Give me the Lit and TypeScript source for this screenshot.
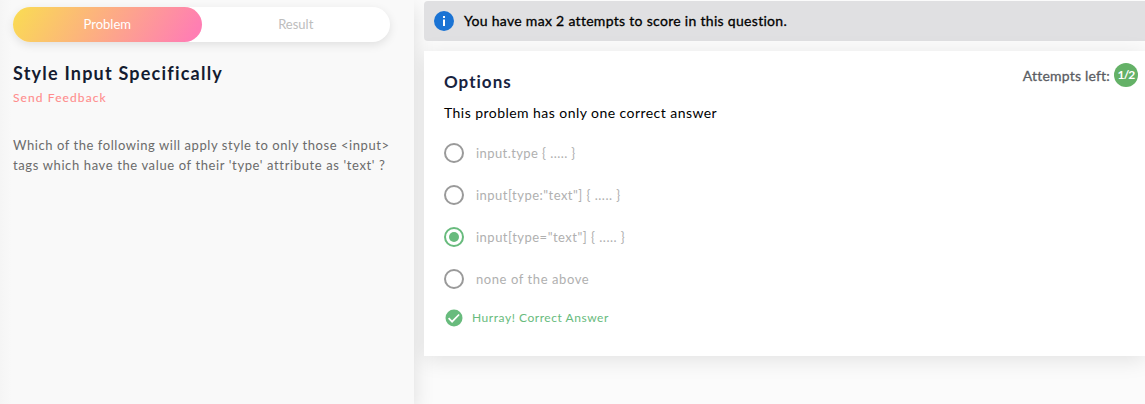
import { LitElement, html, css, svg } from "lit";
import { classMap } from "lit/directives/class-map.js";

interface Choice {
  label: string;
  spacing: string;
}

const CHOICES: Choice[] = [
  { label: "input.type { ..... }", spacing: "0.42px" },
  { label: 'input[type:"text"] { ..... }', spacing: "0.48px" },
  { label: 'input[type="text"] { ..... }', spacing: "0.49px" },
  { label: "none of the above", spacing: "0.58px" },
];

const infoIcon = svg`<svg class="info" width="20" height="20" viewBox="0 0 20 20">
  <circle cx="10" cy="10" r="10" fill="#1a73d4"/>
  <path d="M9 5h2v2H9zM9 8.6h2V15H9z" fill="#fff"/>
</svg>`;

const checkIcon = svg`<svg class="check" width="18" height="18" viewBox="0 0 18 18">
  <circle cx="9" cy="9" r="8.5" fill="#68bb7d"/>
  <path d="M3.6 9.2l3.5 3.5 7-7.2" fill="none" stroke="#fff" stroke-width="1.7"/>
</svg>`;

class ProblemPanel extends LitElement {
  static styles = css`
    :host {
      display: block;
      box-sizing: border-box;
      width: 414px;
      height: 404px;
      padding: 7px 24px 0 13px;
      background: linear-gradient(90deg, #f5f5f5, #f9f9f9 12px);
      box-shadow: 0 8px 20px rgba(0, 0, 0, 0.12);
    }
    .tabs {
      display: flex;
      height: 35px;
      border-radius: 18px;
      background: #fff;
      box-shadow: 0 3px 10px rgba(0, 0, 0, 0.1);
    }
    .tab {
      flex: 1;
      text-align: center;
      line-height: 35px;
      font-size: 13px;
      color: #bdbdbd;
    }
    .active {
      border-radius: 18px;
      color: #fff;
      background: linear-gradient(122deg, #fad956 4%, #ff7eb3 94%);
    }
    h1 {
      margin: 19px 0 0;
      font-size: 18px;
      line-height: 24px;
      font-weight: 700;
      letter-spacing: 1.21px;
      color: #141c30;
      white-space: nowrap;
    }
    .feedback {
      margin-top: 5px;
      font-size: 12px;
      line-height: 16px;
      letter-spacing: 1.1px;
      color: #ff8c8c;
      -webkit-text-stroke: 0.1px #ff8c8c;
    }
    p {
      margin: 29px 0 0;
      font-size: 13px;
      line-height: 20px;
      letter-spacing: 0.56px;
      color: #6b6b6b;
      white-space: nowrap;
    }
    .second {
      letter-spacing: 0.62px;
    }
  `;

  render() {
    return html`
      <nav class="tabs">
        <div class="tab active">Problem</div>
        <div class="tab">Result</div>
      </nav>
      <h1>Style Input Specifically</h1>
      <div class="feedback">Send Feedback</div>
      <p>
        Which of the following will apply style to only those &lt;input&gt;<br />
        <span class="second">tags which have the value of their 'type' attribute as 'text' ?</span>
      </p>
    `;
  }
}
customElements.define("problem-panel", ProblemPanel);

class AnswerPanel extends LitElement {
  static properties = { selected: { type: Number } };
  declare selected: number;

  constructor() {
    super();
    this.selected = 2;
  }

  static styles = css`
    :host {
      display: block;
      overflow: hidden;
      padding: 1px 0 0 10px;
    }
    .banner {
      display: flex;
      align-items: center;
      gap: 10px;
      height: 40px;
      box-sizing: border-box;
      padding-left: 10px;
      border-radius: 4px 0 0 4px;
      background: #e0e0e2;
      font-size: 14px;
      color: #000;
      letter-spacing: 0.3px;
      -webkit-text-stroke: 0.3px #000;
    }
    .banner span {
      padding-bottom: 2px;
    }
    .card {
      display: flex;
      justify-content: space-between;
      align-items: flex-start;
      box-sizing: border-box;
      height: 305px;
      margin-top: 10px;
      padding: 12px 7px 0 20px;
      background: #fff;
      box-shadow: 0 4px 20px rgba(0, 0, 0, 0.1);
    }
    h2 {
      margin: 8px 0 0;
      font-size: 17px;
      line-height: 22px;
      letter-spacing: 1.02px;
      color: #18233f;
    }
    .hint {
      margin-top: 10px;
      font-size: 14px;
      line-height: 20px;
      letter-spacing: 0.45px;
      color: #000;
    }
    .choice {
      display: flex;
      align-items: center;
      height: 20px;
      margin-top: 22px;
      font-size: 13px;
      color: #b0b0b0;
      gap: 12px;
      white-space: pre;
    }
    .hint + .choice {
      margin-top: 20px;
    }
    .radio {
      display: grid;
      place-items: center;
      box-sizing: border-box;
      width: 20px;
      height: 20px;
      border: 2px solid #9a9a9a;
      border-radius: 50%;
    }
    .radio.on {
      border-color: #68bb7d;
    }
    .on::after {
      content: "";
      width: 10px;
      height: 10px;
      border-radius: 50%;
      background: #68bb7d;
    }
    .result {
      display: flex;
      align-items: center;
      gap: 9px;
      height: 18px;
      margin: 20px 0 0 1px;
      font-size: 12px;
      letter-spacing: 0.54px;
      color: #68bb7d;
    }
    .result span {
      padding-bottom: 2px;
    }
    .attempts {
      display: flex;
      align-items: center;
      gap: 4px;
      font-size: 14px;
      color: #5b5d63;
      letter-spacing: 0.2px;
      -webkit-text-stroke: 0.3px #5b5d63;
    }
    .count {
      width: 24px;
      height: 24px;
      border-radius: 50%;
      background: #64b167;
      color: #fff;
      text-align: center;
      line-height: 24px;
      font-size: 12px;
      font-weight: 700;
      letter-spacing: -0.9px;
      -webkit-text-stroke: 0;
    }
  `;

  render() {
    return html`
      <div class="banner">${infoIcon}<span>You have max 2 attempts to score in this question.</span></div>
      <section class="card">
        <div>
          <h2>Options</h2>
          <div class="hint">This problem has only one correct answer</div>
          ${CHOICES.map(
            (c, i) => html`<div class="choice" @click=${() => (this.selected = i)}><span
              class=${classMap({ radio: true, on: i === this.selected })}></span><span
              style="letter-spacing:${c.spacing}">${c.label}</span></div>`
          )}
          <div class="result">${checkIcon}<span>Hurray! Correct Answer</span></div>
        </div>
        <div class="attempts"><span>Attempts left:</span><span class="count">1/2</span></div>
      </section>
    `;
  }
}
customElements.define("answer-panel", AnswerPanel);

class AppRoot extends LitElement {
  static styles = css`
    :host {
      display: grid;
      grid-template-columns: 414px 1fr;
      height: 404px;
      overflow: hidden;
      background: #fbfbfb;
      font-family: Lato, "Open Sans", sans-serif;
      font-variant-ligatures: none;
    }
  `;

  render() {
    return html`<problem-panel></problem-panel><answer-panel></answer-panel>`;
  }
}
customElements.define("app-root", AppRoot);
